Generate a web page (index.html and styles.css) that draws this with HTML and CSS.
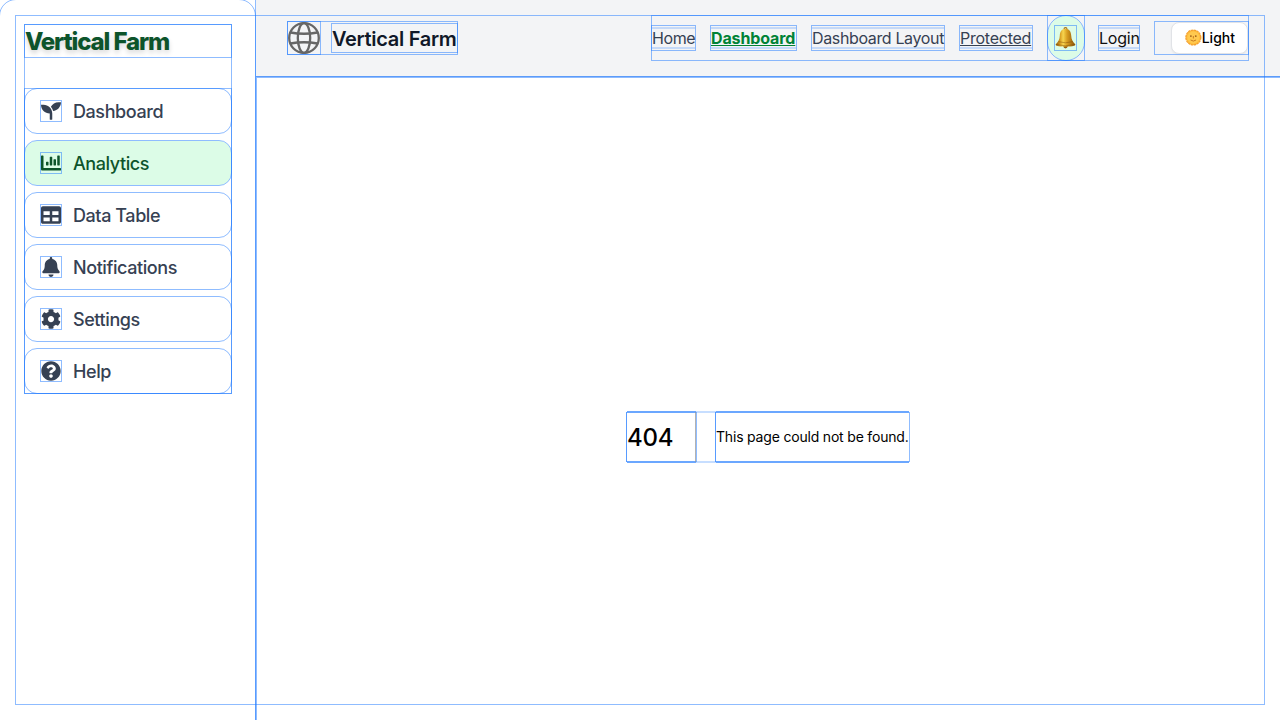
FILE: index.html
```html
<!DOCTYPE html>
<html lang="en">
<head>
<meta charset="utf-8">
<title>Vertical Farm</title>
<link rel="stylesheet" href="styles.css">
</head>
<body>
<div class="app">
  <aside class="sidebar">
    <div class="sidebar-inner box">
      <h1 class="sidebar-title box"><span>Vertical Farm</span></h1>
      <nav class="side-nav box">
        <a class="side-link box"><svg class="icon box" viewBox="0 0 512 512"><path d="M64 96H0c0 123.7 100.3 224 224 224v144c0 8.800 7.200 16 16 16h32c8.800 0 16-7.200 16-16V320C288 196.300 187.700 96 64 96zm384-64c-84.200 0-157.400 46.500-195.700 115.200 27.700 30.200 48.200 66.900 59 107.600C424 243.100 512 147.900 512 32h-64z"/></svg><span>Dashboard</span></a>
        <a class="side-link active box"><svg class="icon box" viewBox="0 0 512 512"><path d="M332.8 320h38.4c6.4 0 12.8-6.4 12.8-12.8V172.8c0-6.4-6.4-12.8-12.8-12.8h-38.4c-6.4 0-12.8 6.4-12.8 12.8v134.4c0 6.4 6.4 12.8 12.8 12.8zm96 0h38.4c6.4 0 12.8-6.4 12.8-12.8V76.8c0-6.4-6.4-12.8-12.8-12.8h-38.4c-6.4 0-12.8 6.4-12.8 12.8v230.4c0 6.4 6.4 12.8 12.8 12.8zm-288 0h38.4c6.4 0 12.8-6.4 12.8-12.8v-70.4c0-6.4-6.4-12.8-12.8-12.8h-38.4c-6.4 0-12.8 6.4-12.8 12.8v70.4c0 6.4 6.4 12.8 12.8 12.8zm96 0h38.4c6.4 0 12.8-6.4 12.8-12.8V108.8c0-6.4-6.4-12.8-12.8-12.8h-38.4c-6.4 0-12.8 6.4-12.8 12.8v198.4c0 6.4 6.4 12.8 12.8 12.8zM496 384H64V80c0-8.84-7.16-16-16-16H16C7.16 64 0 71.16 0 80v336c0 17.67 14.33 32 32 32h464c8.84 0 16-7.16 16-16v-32c0-8.84-7.16-16-16-16z"/></svg><span>Analytics</span></a>
        <a class="side-link box"><svg class="icon box" viewBox="0 0 512 512"><path d="M464 32H48C21.49 32 0 53.49 0 80v352c0 26.51 21.49 48 48 48h416c26.51 0 48-21.49 48-48V80c0-26.51-21.49-48-48-48zM224 416H64v-96h160v96zm0-160H64v-96h160v96zm224 160H288v-96h160v96zm0-160H288v-96h160v96z"/></svg><span>Data Table</span></a>
        <a class="side-link box"><svg class="icon box" viewBox="0 0 448 512"><path d="M224 512c35.32 0 63.97-28.65 63.97-64H160.03c0 35.35 28.65 64 63.97 64zm215.39-149.71c-19.32-20.76-55.47-51.99-55.47-154.29 0-77.7-54.48-139.9-127.94-155.16V32c0-17.67-14.32-32-31.98-32s-31.98 14.33-31.98 32v20.84C118.56 68.1 64.08 130.3 64.08 208c0 102.3-36.15 133.53-55.47 154.29-6 6.45-8.66 14.16-8.61 21.71.11 16.4 12.98 32 32.1 32h383.8c19.12 0 32-15.6 32.1-32 .05-7.55-2.61-15.27-8.61-21.71z"/></svg><span>Notifications</span></a>
        <a class="side-link box"><svg class="icon box" viewBox="0 0 512 512"><path d="M487.4 315.7l-42.6-24.6c4.3-23.2 4.3-47 0-70.2l42.6-24.6c4.9-2.8 7.1-8.6 5.5-14-11.1-35.6-30-67.8-54.7-94.6-3.8-4.1-10-5.1-14.8-2.3L380.8 110c-17.9-15.4-38.5-27.3-60.8-35.1V25.8c0-5.6-3.9-10.5-9.4-11.7-36.7-8.2-74.3-7.8-109.2 0-5.5 1.2-9.4 6.1-9.4 11.7V75c-22.2 7.9-42.8 19.8-60.8 35.1L88.7 85.500c-4.9-2.8-11-1.9-14.8 2.3-24.7 26.700-43.6 58.900-54.7 94.600-1.7 5.400.6 11.200 5.500 14L67.300 221c-4.3 23.200-4.3 47 0 70.200l-42.600 24.600c-4.9 2.800-7.1 8.600-5.500 14 11.100 35.600 30 67.800 54.700 94.600 3.800 4.100 10 5.100 14.800 2.300l42.600-24.600c17.900 15.400 38.500 27.300 60.800 35.100v49.200c0 5.600 3.900 10.500 9.400 11.700 36.700 8.200 74.300 7.800 109.200 0 5.500-1.200 9.400-6.100 9.400-11.700v-49.200c22.200-7.9 42.800-19.800 60.800-35.100l42.600 24.600c4.900 2.800 11 1.900 14.800-2.300 24.700-26.700 43.600-58.900 54.700-94.600 1.500-5.500-.7-11.300-5.600-14.100zM256 336c-44.100 0-80-35.900-80-80s35.900-80 80-80 80 35.900 80 80-35.900 80-80 80z"/></svg><span>Settings</span></a>
        <a class="side-link box"><svg class="icon box" viewBox="0 0 512 512"><path d="M504 256c0 136.997-111.043 248-248 248S8 392.997 8 256C8 119.083 119.043 8 256 8s248 111.083 248 248zM262.655 90c-54.497 0-89.255 22.957-116.549 63.758-3.536 5.286-2.353 12.415 2.715 16.258l34.699 26.31c5.205 3.947 12.621 3.008 16.665-2.122 17.864-22.658 30.113-35.797 57.303-35.797 20.429 0 45.698 13.148 45.698 32.958 0 14.976-12.363 22.667-32.534 33.976C247.128 238.528 216 254.941 216 296v4c0 6.627 5.373 12 12 12h56c6.627 0 12-5.373 12-12v-1.333c0-28.462 83.186-29.647 83.186-106.667 0-58.002-60.165-102-116.531-102zM256 338c-25.365 0-46 20.635-46 46 0 25.364 20.635 46 46 46s46-20.636 46-46c0-25.364-20.635-46-46-46z"/></svg><span>Help</span></a>
      </nav>
    </div>
  </aside>
  <div class="column">
    <header class="header">
      <div class="brand box">
        <svg class="globe box" viewBox="0 0 32 32" fill="none" stroke="#666" stroke-width="2.3"><circle cx="16" cy="16" r="14.8"/><ellipse cx="16" cy="16" rx="6.200" ry="14.800"/><path d="M2.500 10.500Q16 13 29.500 10.500M2.500 21.500Q16 19 29.500 21.500"/></svg>
        <span class="brand-name box">Vertical Farm</span>
      </div>
      <nav class="top-nav box">
        <a class="nav-link home box">Home</a>
        <a class="nav-link current box">Dashboard</a>
        <a class="nav-link layout box">Dashboard Layout</a>
        <a class="nav-link protected box">Protected</a>
        <div class="bell-item box">
          <button class="bell-button box">
            <svg class="bell box" viewBox="0 0 21 24">
              <defs><linearGradient id="gold"><stop offset="0" stop-color="#8d5a0c"/><stop offset=".22" stop-color="#d69a20"/><stop offset=".38" stop-color="#f7d54f"/><stop offset=".58" stop-color="#d89d20"/><stop offset="1" stop-color="#875108"/></linearGradient></defs>
              <path d="M8.900 3.500Q9 1.600 10.500 1.600T12.100 3.500" fill="none" stroke="#a87318" stroke-width="1.100"/>
              <circle cx="10.500" cy="20.300" r="2.100" fill="#98600f"/>
              <path d="M10.500 2.700C6.500 2.700 5 5.800 4.800 9.500C4.600 13.400 3.500 15.700.8 18.200C.4 18.700.8 19.400 2 19.700C6.500 20.900 14.500 20.900 19 19.700C20.200 19.400 20.600 18.700 20.200 18.200C17.500 15.700 16.400 13.400 16.200 9.500C16 5.800 14.500 2.700 10.500 2.700Z" fill="url(#gold)"/>
              <path d="M3.600 15.700Q10.500 17.900 17.400 15.700M1.300 18.600Q10.500 21 19.700 18.600" fill="none" stroke="#7b4a09" stroke-width=".7" opacity=".65"/>
            </svg>
          </button>
        </div>
        <a class="nav-link login box">Login</a>
        <div class="theme box">
          <button class="theme-button">
            <svg class="sun" viewBox="0 0 17 17"><circle cx="8.500" cy="8.500" r="7.600" fill="#ffbe3d" stroke="#f5a02f" stroke-width="1.300" stroke-dasharray="2.400 .6"/><circle cx="8.500" cy="8.500" r="6" fill="#ffc94f"/><circle cx="6" cy="7" r=".9" fill="#9b5c18"/><circle cx="11" cy="7" r=".9" fill="#9b5c18"/><path d="M8.500 7v2.500M5.700 11Q8.500 13.300 11.300 11" fill="none" stroke="#c87922" stroke-width="1"/></svg><span>Light</span>
          </button>
        </div>
      </nav>
    </header>
    <main class="main">
      <div class="error">
        <h2 class="code soft-box">404</h2>
        <div class="message-box soft-box"><p class="message">This page could not be found.</p></div>
      </div>
    </main>
  </div>
  <div class="frame box"></div>
</div>
</body>
</html>
```
FILE: styles.css
```css
* { box-sizing: border-box; margin: 0; padding: 0; }
:root { --line: rgba(31, 122, 255, .5); --half: rgba(31, 122, 255, .55); --strong: rgba(31, 122, 255, .75); --faint: rgba(31, 122, 255, .25); }
body { font-family: Inter, "Liberation Sans", sans-serif; background: #fff; color: #000; overflow: hidden; }
a { text-decoration: none; }
button { font: inherit; border: 0; }
.box { outline: 1px solid var(--line); }
.app { position: relative; display: flex; width: 1280px; height: 720px; overflow: hidden; }
.sidebar { flex: none; width: 255px; height: 740px; padding: 25px 24px 0 25px; margin-right: 1px; border-radius: 16px; outline: 1px solid var(--line); background: #fff; }
.sidebar-inner { width: 206px; }
.sidebar-title { height: 32px; padding-top: 1px; margin-bottom: 32px; font-size: 24px; line-height: 32px; font-weight: 800; letter-spacing: -1.13px; color: #0d542b; text-shadow: 0 3px 5px rgba(0, 0, 0, .16); }
.side-nav { display: flex; flex-direction: column; gap: 8px; }
.side-link { display: flex; align-items: center; gap: 12px; height: 44px; padding: 0 16px; border-radius: 12px; font-size: 18px; line-height: 28px; font-weight: 500; letter-spacing: -.42px; color: #364153; }
.side-link span { padding-top: 2px; }
.side-link.active { background: #dcfce7; color: #0d542b; }
.icon { width: 20px; height: 20px; fill: currentColor; }
.column { flex: none; width: 1024px; outline: 1px solid var(--line); }
.header { display: flex; align-items: center; justify-content: space-between; height: 77px; padding: 0 32px; background: #f3f4f6; border-bottom: 1px solid #5c9bf9; }
.brand { display: flex; align-items: center; gap: 12px; width: 169px; height: 32px; }
.globe { width: 32px; height: 32px; }
.brand-name { width: 125px; height: 28px; font-size: 20px; line-height: 30px; font-weight: 600; letter-spacing: -.31px; color: #101828; white-space: nowrap; }
.top-nav { display: flex; align-items: center; width: 596px; height: 44px; }
.nav-link { height: 24px; margin-right: 16px; font-size: 16px; line-height: 24px; color: #364153; white-space: nowrap; background: linear-gradient(rgba(31, 122, 255, .22) 0 0) 0 1px / 100% 2px no-repeat, linear-gradient(rgba(31, 122, 255, .22) 0 0) 0 21px / 100% 2px no-repeat; }
.home { width: 43px; letter-spacing: -.4px; }
.current { width: 85px; font-weight: 700; letter-spacing: -.12px; color: #008236; text-decoration: underline; }
.layout { width: 132px; letter-spacing: -.36px; }
.protected { width: 72px; letter-spacing: -.24px; text-decoration: underline; }
.login { width: 40px; letter-spacing: -.2px; color: #101010; }
.bell-item { width: 36px; height: 44px; margin-right: 15px; }
.bell-button { display: flex; align-items: center; justify-content: center; width: 36px; height: 44px; border-radius: 18px; background: #dcfce7; }
.bell { width: 21px; height: 24px; margin-right: 1px; }
.theme { display: flex; justify-content: flex-end; width: 93px; height: 32px; }
.theme-button { display: flex; align-items: center; width: 77px; height: 32px; padding: 0 12px 0 13px; border: 1px solid #e1e3e7; border-radius: 8px; background: #fff; font-size: 14px; line-height: 20px; font-weight: 500; color: #000; box-shadow: 0 1px 2px rgba(0, 0, 0, .06); }
.theme-button span { padding-bottom: 1px; }
.sun { width: 17px; height: 17px; margin-bottom: 1px; }
.main { display: flex; align-items: center; justify-content: center; height: 719px; padding-right: 1px; border-left: 1px solid var(--line); border-top: 1px solid var(--line); }
.error { display: flex; width: 282px; height: 50px; box-shadow: inset 0 1px var(--faint), inset 0 -1px var(--faint), 0 -1px var(--faint), 0 1px var(--faint); }
.soft-box { box-shadow: inset 0 1px var(--half), inset 0 -1px var(--half), 0 -1px var(--half), 0 1px var(--half), -1px 0 var(--strong), 1px 0 var(--line); }
.code { width: 69px; margin-right: 20px; border-right: 1px solid rgba(0, 0, 0, .3); font-size: 24px; line-height: 52px; font-weight: 500; letter-spacing: -.3px; }
.message-box { display: flex; align-items: center; width: 193px; }
.message { font-size: 14px; line-height: 28px; letter-spacing: -.19px; white-space: nowrap; }
.frame { position: absolute; left: 16px; top: 16px; width: 1248px; height: 688px; pointer-events: none; }
```
